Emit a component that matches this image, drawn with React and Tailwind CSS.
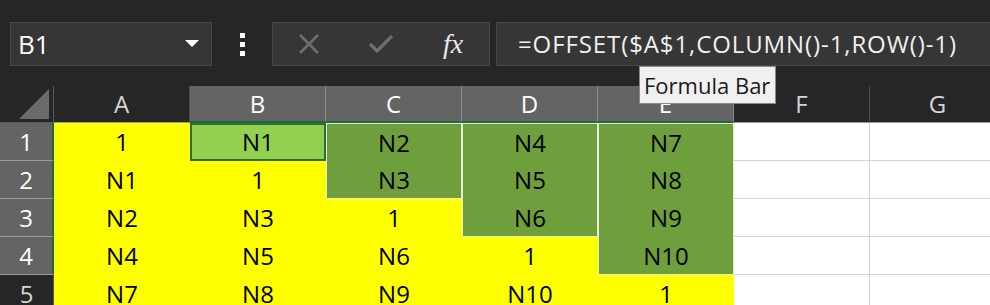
import React from "react";

const Y = "bg-[#ffff00]";
const W = "bg-white border-r border-b border-[#d4d4d4]";
const G = "bg-[#6f9f3d] border-[#e4ecd6]";

const cols = [
  { l: "A", on: false },
  { l: "B", on: true },
  { l: "C", on: true },
  { l: "D", on: true },
  { l: "E", on: true },
  { l: "F", on: false },
  { l: "G", on: false },
];

const rows = [
  {
    n: 1, on: true,
    cells: [
      { t: "1", c: Y },
      { t: "N1", c: "bg-[#92d050] border-2 border-[#2f6b37]" },
      { t: "N2", c: `${G} border-t border-x` },
      { t: "N4", c: `${G} border-t border-x` },
      { t: "N7", c: `${G} border-t border-x` },
      { t: "", c: W },
      { t: "", c: W },
    ],
  },
  {
    n: 2, on: true,
    cells: [
      { t: "N1", c: Y },
      { t: "1", c: Y },
      { t: "N3", c: `${G} border-x border-b` },
      { t: "N5", c: `${G} border-x` },
      { t: "N8", c: `${G} border-x` },
      { t: "", c: W },
      { t: "", c: W },
    ],
  },
  {
    n: 3, on: true,
    cells: [
      { t: "N2", c: Y },
      { t: "N3", c: Y },
      { t: "1", c: Y },
      { t: "N6", c: `${G} border-x border-b` },
      { t: "N9", c: `${G} border-x` },
      { t: "", c: W },
      { t: "", c: W },
    ],
  },
  {
    n: 4, on: true,
    cells: [
      { t: "N4", c: Y },
      { t: "N5", c: Y },
      { t: "N6", c: Y },
      { t: "1", c: Y },
      { t: "N10", c: `${G} border-x border-b` },
      { t: "", c: W },
      { t: "", c: W },
    ],
  },
  {
    n: 5, on: false,
    cells: [
      { t: "N7", c: Y },
      { t: "N8", c: Y },
      { t: "N9", c: Y },
      { t: "N10", c: Y },
      { t: "1", c: Y },
      { t: "", c: W },
      { t: "", c: W },
    ],
  },
];

const ui = { fontFamily: '"Open Sans", "Noto Sans", sans-serif' };

export default function App() {
  return (
    <div className="relative w-[990px] h-[305px] overflow-hidden bg-[#262626]" style={ui}>
      {/* Formula bar */}
      <div className="flex items-start h-[86px] pt-[22px]">
        <div className="ml-[10px] w-[202px] h-[44px] bg-[#363636] border border-[#474747] flex items-center justify-between pl-[7px] pr-[12px]">
          <span className="text-[26px] text-white leading-none">B1</span>
          <svg width="14" height="8" viewBox="0 0 14 8">
            <path d="M0 0 L14 0 L7 7 Z" fill="#ffffff" />
          </svg>
        </div>
        <div className="w-[60px] h-[44px] flex flex-col items-center justify-center gap-[4px]">
          <span className="block w-[5px] h-[5px] bg-white" />
          <span className="block w-[5px] h-[5px] bg-white" />
          <span className="block w-[5px] h-[5px] bg-white" />
        </div>
        <div className="w-[218px] h-[44px] bg-[#363636] border border-[#474747] flex items-center">
          <div className="w-[72px] flex justify-center">
            <svg width="24" height="24" viewBox="0 0 24 24">
              <path d="M3 3 L21 21 M21 3 L3 21" stroke="#6e6e6e" strokeWidth="2.6" fill="none" />
            </svg>
          </div>
          <div className="w-[72px] flex justify-center">
            <svg width="28" height="24" viewBox="0 0 28 24">
              <path d="M3 12 L10 19 L25 4" stroke="#6e6e6e" strokeWidth="3.2" fill="none" />
            </svg>
          </div>
          <div className="w-[72px] flex justify-center">
            <span
              className="text-[28px] italic text-[#e8e8e8] leading-none"
              style={{ fontFamily: '"Liberation Serif", "DejaVu Serif", serif' }}
            >
              fx
            </span>
          </div>
        </div>
        <div className="ml-[6px] flex-1 h-[44px] bg-[#363636] border-y border-l border-[#474747] flex items-center pl-[21px]">
          <span className="text-[24px] tracking-[0.9px] text-[#f0f0f0] leading-none whitespace-nowrap">
            =OFFSET($A$1,COLUMN()-1,ROW()-1)
          </span>
        </div>
      </div>

      {/* Column headers */}
      <div className="flex h-[37px]">
        <div className="w-[54px] shrink-0 border-r border-b border-[#5a5a5a] bg-[#262626] flex items-end justify-end pr-[4px] pb-[3px]">
          <svg width="30" height="30" viewBox="0 0 30 30">
            <path d="M30 0 L30 30 L0 30 Z" fill="#6a6a6a" />
          </svg>
        </div>
        {cols.map((col) => (
          <div
            key={col.l}
            className={`w-[136px] shrink-0 flex items-center justify-center text-[24px] leading-none ${
              col.on
                ? "bg-[#646464] text-white border-r border-[#8a8a8a] border-b-2 border-b-[#1e6b3c]"
                : "bg-[#262626] text-[#d6d6d6] border-r border-[#4c4c4c] border-b border-b-[#9a9a9a]"
            }`}
          >
            {col.l}
          </div>
        ))}
      </div>

      {/* Rows */}
      {rows.map((row) => (
        <div key={row.n} className="flex h-[38px]">
          <div
            className={`w-[54px] shrink-0 flex items-center justify-center text-[24px] leading-none ${
              row.on
                ? "bg-[#646464] text-white border-b border-[#9a9a9a] border-r-2 border-r-[#1e6b3c]"
                : "bg-[#262626] text-[#d6d6d6] border-r border-[#5a5a5a]"
            }`}
          >
            {row.n}
          </div>
          {row.cells.map((cell, i) => (
            <div
              key={i}
              className={`w-[136px] shrink-0 flex items-center justify-center text-[24px] text-black leading-none ${cell.c}`}
            >
              {cell.t}
            </div>
          ))}
        </div>
      ))}

      {/* Tooltip */}
      <div className="absolute left-[639px] top-[66px] h-[38px] w-[137px] pl-[4px] bg-[#f0f0f0] border border-[#8a8a8a] flex items-center">
        <span className="text-[22px] text-[#1a1a1a] leading-none whitespace-nowrap">Formula Bar</span>
      </div>
    </div>
  );
}
